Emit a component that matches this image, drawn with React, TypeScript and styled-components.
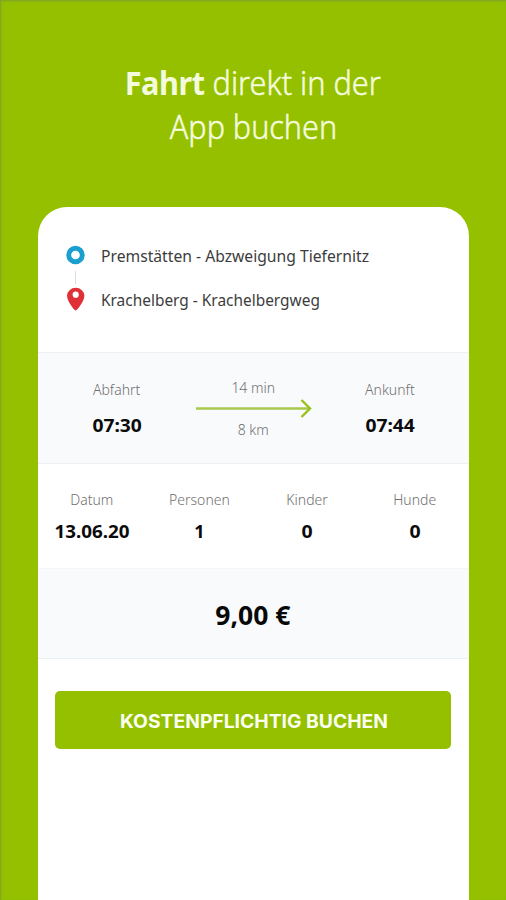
import React from "react";
import styled, { createGlobalStyle } from "styled-components";

const GlobalStyle = createGlobalStyle`
  * { box-sizing: border-box; }
  body { margin: 0; background: #94c000; }
`;

const Screen = styled.main`
  width: 506px;
  height: 900px;
  overflow: hidden;
  background: #94c000;
  box-shadow: inset 1px 1px 2px #7fa030;
  font-family: "Noto Sans", "Open Sans", sans-serif;
  display: flex;
  flex-direction: column;
  padding: 61px 37.5px 0 38px;
`;

const Title = styled.h1`
  margin: 0;
  height: 146px;
  display: flex;
  flex-direction: column;
  align-items: center;
  color: #f4fbdc;
  font-size: 33px;
  line-height: 44px;
  font-weight: 300;
  -webkit-text-stroke: 0.5px #f4fbdc;
  b { font-weight: 700; letter-spacing: -0.5px; -webkit-text-stroke: 0; }
`;

const Label = styled.span<{ $scale?: number; $origin?: string }>`
  display: inline-block;
  white-space: pre;
  transform: scaleX(${(p) => p.$scale ?? 1});
  transform-origin: ${(p) => p.$origin ?? "center"};
`;

const Card = styled.section`
  flex: 1;
  background: #fff;
  border-radius: 29px 29px 0 0;
  overflow: hidden;
`;

const Route = styled.div`
  height: 145px;
  padding: 27px 0 0 27px;
`;

const Stop = styled.div`
  height: 44px;
  display: flex;
  align-items: center;
  gap: 15px;
  padding-bottom: 2px;
  font-size: 16.5px;
  line-height: 24px;
  color: #3c3c3c;
  position: relative;
  > span { padding-top: 2px; }
`;

const Connector = styled.i`
  position: absolute;
  left: 10px;
  top: 37px;
  width: 1px;
  height: 13px;
  background: #dddde0;
`;

const Trip = styled.div`
  height: 112px;
  display: grid;
  grid-template-columns: 1fr 116px 1fr;
  background: #f8fafc;
  border-top: 1px solid #edf0f2;
  border-bottom: 1px solid #edf0f2;
`;

const Details = styled.div`
  height: 104px;
  display: grid;
  grid-template-columns: repeat(4, 1fr);
`;

const Cell = styled.div<{ $top: number; $gap: number }>`
  display: flex;
  flex-direction: column;
  align-items: center;
  padding-top: ${(p) => p.$top}px;
  gap: ${(p) => p.$gap}px;
`;

const Caption = styled.div`
  font-size: 14px;
  line-height: 20px;
  font-weight: 300;
  color: #707070;
`;

const Value = styled.div`
  font-size: 18px;
  line-height: 24px;
  font-weight: 700;
  color: #0b0b0b;
`;

const Middle = styled.div`
  display: flex;
  flex-direction: column;
  align-items: center;
  padding-top: 25px;
  svg { display: block; margin-left: 1px; }
`;

const Price = styled.div`
  height: 91px;
  display: flex;
  align-items: center;
  justify-content: center;
  background: #f8fafc;
  border-top: 1px solid #f3f5f6;
  border-bottom: 1px solid #edf0f2;
  font-size: 26px;
  line-height: 36px;
  padding-top: 2px;
  font-weight: 700;
  color: #080808;
`;

const BookButton = styled.button`
  display: flex;
  align-items: center;
  justify-content: center;
  width: 396px;
  height: 58px;
  margin: 32px 0 0 17.4px;
  padding: 3px 0 0 1px;
  border: 0;
  border-radius: 5px;
  background: #94c000;
  color: #fbfff0;
  font: 700 19px/24px Inter, sans-serif;
`;

const StartIcon = () => (
  <svg width="21" height="24" viewBox="0 0 21 24">
    <circle cx="10.5" cy="12" r="6.8" fill="none" stroke="#1a9fd0" strokeWidth="4.9" />
  </svg>
);

const PinIcon = () => (
  <svg width="21" height="24" viewBox="0 0 21 24">
    <path
      d="M10.7 23.6C9.2 23.6 2 13.8 2 8.8a8.7 8 0 0 1 17.4 0c0 5-7.2 14.8-8.7 14.8zM10.7 4.6a3.1 3.1 0 1 0 0 6.2 3.1 3.1 0 0 0 0-6.2z"
      fill="#df3038"
      fillRule="evenodd"
    />
  </svg>
);

const Arrow = () => (
  <svg width="116" height="22" viewBox="0 0 116 22" fill="none">
    <path d="M0 10.5h113" stroke="#a9c94c" strokeWidth="2.4" />
    <path d="M105.5 2 114 10.5 105.5 19" stroke="#98c11c" strokeWidth="2.4" />
  </svg>
);

const details = [
  { name: "Datum", value: "13.06.20", valueScale: 1.045 },
  { name: "Personen", value: "1", valueScale: 1 },
  { name: "Kinder", value: "0", valueScale: 1.08 },
  { name: "Hunde", value: "0", valueScale: 1.08 },
];

export default function App() {
  return (
    <Screen>
      <GlobalStyle />
      <Title>
        <Label $scale={0.93}><b>Fahrt</b> direkt in der</Label>
        <Label $scale={0.925}>App buchen</Label>
      </Title>
      <Card>
        <Route>
          <Stop>
            <StartIcon />
            <Label $origin="left" $scale={0.95}>Premstätten - Abzweigung Tiefernitz</Label>
            <Connector />
          </Stop>
          <Stop>
            <PinIcon />
            <Label $origin="left" $scale={0.935}>Krachelberg - Krachelbergweg</Label>
          </Stop>
        </Route>
        <Trip>
          <Cell $top={27} $gap={13}>
            <Caption><Label>Abfahrt</Label></Caption>
            <Value><Label $scale={1.07}>07:30</Label></Value>
          </Cell>
          <Middle>
            <Caption><Label>14 min</Label></Caption>
            <Arrow />
            <Caption><Label>8 km</Label></Caption>
          </Middle>
          <Cell $top={27} $gap={13}>
            <Caption><Label>Ankunft</Label></Caption>
            <Value><Label $scale={1.07}>07:44</Label></Value>
          </Cell>
        </Trip>
        <Details>
          {details.map((d) => (
            <Cell key={d.name} $top={26} $gap={9}>
              <Caption><Label>{d.name}</Label></Caption>
              <Value><Label $scale={d.valueScale}>{d.value}</Label></Value>
            </Cell>
          ))}
        </Details>
        <Price><Label $scale={1.02}>9,00 €</Label></Price>
        <BookButton type="button"><Label $scale={1.015}>KOSTENPFLICHTIG BUCHEN</Label></BookButton>
      </Card>
    </Screen>
  );
}
